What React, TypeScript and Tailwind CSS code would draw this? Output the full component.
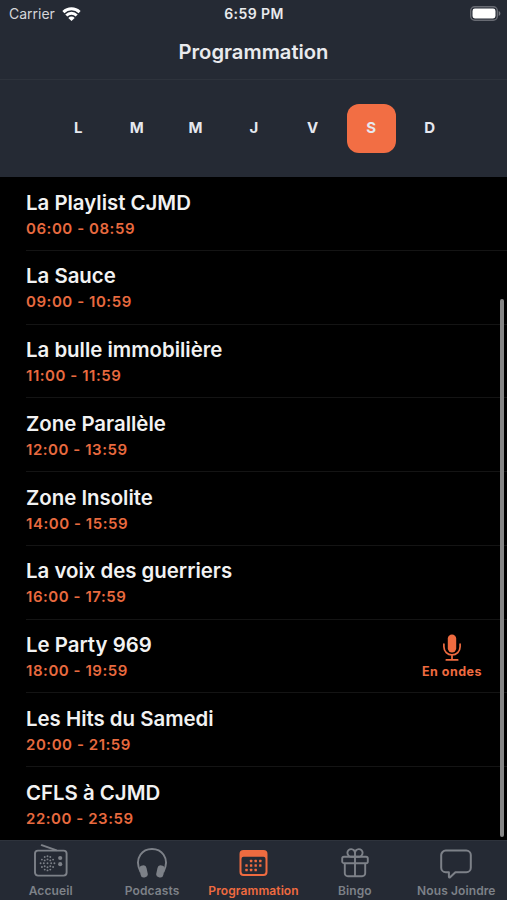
import type { ReactNode } from "react";

type Show = { title: string; time: string; live?: boolean };

const days = ["L", "M", "M", "J", "V", "S", "D"];
const selectedDay = 5;

const shows: Show[] = [
  { title: "La Playlist CJMD", time: "06:00 - 08:59" },
  { title: "La Sauce", time: "09:00 - 10:59" },
  { title: "La bulle immobilière", time: "11:00 - 11:59" },
  { title: "Zone Parallèle", time: "12:00 - 13:59" },
  { title: "Zone Insolite", time: "14:00 - 15:59" },
  { title: "La voix des guerriers", time: "16:00 - 17:59" },
  { title: "Le Party 969", time: "18:00 - 19:59", live: true },
  { title: "Les Hits du Samedi", time: "20:00 - 21:59" },
  { title: "CFLS à CJMD", time: "22:00 - 23:59" },
];

function WifiIcon() {
  return (
    <svg className="ml-[7px] h-[14px] w-[19px] text-white" viewBox="0 0 18 14" fill="none" stroke="currentColor" strokeWidth="2.9">
      <path d="M0.9 5.1a11.5 11.5 0 0 1 16.2 0" />
      <path d="M3.8 8.5a7.3 7.3 0 0 1 10.4 0" />
      <path d="M9 14 5.8 10.9a4.6 4.6 0 0 1 6.400 0z" fill="currentColor" stroke="none" />
    </svg>
  );
}

function BatteryIcon() {
  return (
    <svg className="h-[15px] w-[31px]" viewBox="0 0 31 15">
      <rect x="0.7" y="0.7" width="26.6" height="13.6" rx="4" fill="none" stroke="#686b73" strokeWidth="1.4" />
      <rect x="2.5" y="2.5" width="23" height="10" rx="2.4" fill="#fff" />
      <path d="M28.7 5v5c1-.4 1.7-1.4 1.7-2.5S29.7 5.4 28.7 5z" fill="#777a82" />
    </svg>
  );
}

function MicIcon() {
  return (
    <svg className="h-[27px] w-[18px]" viewBox="0 0 18 27" fill="none" stroke="currentColor" strokeWidth="1.7" strokeLinecap="round">
      <rect x="4.8" y="0.4" width="8.4" height="18" rx="4.2" fill="currentColor" stroke="none" />
      <path d="M0.9 10.2v2.6a8.1 8.1 0 0 0 16.2 0v-2.6M9 21v4.8M3.3 25.9h11.4" />
    </svg>
  );
}

const speakerDots = [
  [13.5, 12.2], [10.7, 13], [16.3, 13],
  [7.9, 15.6], [13.5, 15.4], [19.1, 15.6], [10.7, 16.4], [16.3, 16.4],
  [6.6, 19.3], [9.8, 19.3], [13.5, 19.3], [17.2, 19.3], [20.4, 19.3],
  [7.9, 23], [13.5, 23.2], [19.1, 23], [10.7, 22.2], [16.3, 22.2],
  [13.5, 26.4], [10.7, 25.6], [16.3, 25.6],
];

function RadioIcon() {
  return (
    <svg className="h-[34px] w-[34px]" viewBox="0 0 34 34" fill="none" stroke="currentColor" strokeWidth="1.9">
      <rect x="1" y="6.6" width="31.6" height="25" rx="3" />
      <path d="M7.7 1.2 22 6.2" strokeLinecap="round" />
      <g fill="currentColor" stroke="none">
        {speakerDots.map(([x, y], i) => (
          <circle key={i} cx={x} cy={y} r="0.95" />
        ))}
        <circle cx="26.2" cy="14" r="2.1" />
        <circle cx="26.2" cy="20.2" r="2.1" />
      </g>
    </svg>
  );
}

function HeadphonesIcon() {
  return (
    <svg className="h-[34px] w-[30px]" viewBox="0 0 30 34" fill="none" stroke="currentColor" strokeWidth="1.9">
      <path d="M3.6 28C.2 21.5.6 14.900 3.400 10.800 8.700 3 21.300 3 26.600 10.800c2.800 4.100 3.200 10.700-.2 17.200" />
      <rect x="3" y="21.4" width="7.2" height="12.1" rx="3.2" transform="rotate(-12 6.6 27.5)" fill="currentColor" stroke="none" />
      <rect x="19.8" y="21.4" width="7.2" height="12.1" rx="3.2" transform="rotate(12 23.4 27.5)" fill="currentColor" stroke="none" />
    </svg>
  );
}

const calendarDots = [
  [12.1, 17], [16.7, 17], [21.3, 17],
  [7.5, 21.5], [12.1, 21.5], [16.7, 21.5], [21.3, 21.5],
  [7.5, 26], [12.1, 26], [16.7, 26],
];

function CalendarIcon() {
  return (
    <svg className="h-[34px] w-[29px]" viewBox="0 0 29 34">
      <path
        d="M4.500 6h20a4 4 0 0 1 4 4v18a4 4 0 0 1-4 4h-20a4 4 0 0 1-4-4V10a4 4 0 0 1 4-4zM4.500 12.800a2 2 0 0 0-2 2v12.900a2.200 2.200 0 0 0 2.200 2.200h19.600a2.200 2.200 0 0 0 2.200-2.200V14.800a2 2 0 0 0-2-2z"
        fill="currentColor"
        fillRule="evenodd"
      />
      {calendarDots.map(([x, y], i) => (
        <rect key={i} x={x - 1.2} y={y - 1.2} width="2.4" height="2.4" rx="0.5" fill="currentColor" />
      ))}
    </svg>
  );
}

function GiftIcon() {
  return (
    <svg className="h-[34px] w-[28px]" viewBox="0 0 28 34" fill="none" stroke="currentColor" strokeWidth="1.9">
      <rect x="1.2" y="12.8" width="25.6" height="6.4" rx="1.8" />
      <path d="M3.8 19.2v10a3 3 0 0 0 3 3h14.4a3 3 0 0 0 3-3v-10M14 12.8v19.400" />
      <path d="M14 12.600V9a3.800 3.800 0 1 0-3.800 3.700zM14 12.600V9a3.800 3.800 0 1 1 3.800 3.700z" />
    </svg>
  );
}

function BubbleIcon() {
  return (
    <svg className="h-[36px] w-[32px] -mb-[2px]" viewBox="0 0 32 36" fill="none" stroke="currentColor" strokeWidth="2" strokeLinejoin="round">
      <path d="M5.700 6.600h20.600a4.500 4.500 0 0 1 4.500 4.500v12.600a4.500 4.500 0 0 1-4.500 4.500H15.400l-5.300 5.100c-.5.500-1.200.2-1.200-.5v-4.600H5.700a4.500 4.500 0 0 1-4.500-4.500V11.100a4.500 4.500 0 0 1 4.500-4.500z" />
    </svg>
  );
}

function Tab({ label, icon, active = false }: { label: string; icon: ReactNode; active?: boolean }) {
  return (
    <a className={`flex flex-1 flex-col items-center pt-[3px] ${active ? "text-[#ef6b40]" : "text-[#7d8188]"}`}>
      {icon}
      <span className="mt-[5px] text-[12px] leading-[16px] font-semibold tracking-[0.1px] whitespace-nowrap">{label}</span>
    </a>
  );
}

export default function App() {
  return (
    <div className="relative flex h-[900px] w-[507px] flex-col overflow-hidden bg-black font-['Inter',sans-serif]">
      <header className="h-[79px] bg-[#252a34] text-[#e9eaed]">
        <div className="grid h-[27px] grid-cols-3 items-center pr-[6px] pl-[9px] text-[14px]">
          <div className="flex items-center text-[#d5d6d9]">
            Carrier
            <WifiIcon />
          </div>
          <div className="text-center font-semibold tracking-[0.4px] -translate-x-px">6:59 PM</div>
          <div className="flex justify-end">
            <BatteryIcon />
          </div>
        </div>
        <h1 className="pt-[11px] text-center text-[20.2px] leading-7 font-semibold">Programmation</h1>
      </header>

      {/* Day picker */}
      <div className="flex h-[98px] items-center justify-center gap-[9.6px] border-t border-[#2e333c] bg-[#252a34] pl-px">
        {days.map((day, i) => (
          <button
            key={i}
            className={`size-[49px] rounded-[12px] text-[15px] font-bold text-[#e6e8ef] ${i === selectedDay ? "bg-[#f26e44]" : ""}`}
          >
            {day}
          </button>
        ))}
      </div>

      <ul>
        {shows.map((show) => (
          <li key={show.title} className="flex h-[73.75px] pl-[26px]">
            <div className="flex flex-1 justify-between border-b border-[#141414] pr-[25px]">
              <div className="pt-[11.5px]">
                <h2 className="text-[20.4px] leading-[27px] font-semibold text-[#f2f2f2]">{show.title}</h2>
                <p className="mt-[2px] text-[15px] leading-[22px] font-semibold tracking-[0.55px] text-[#e86a3f]">{show.time}</p>
              </div>
              {show.live && (
                <div className="flex flex-col items-center pt-[14px] text-[#ef6b40]">
                  <MicIcon />
                  <span className="mt-[3px] text-[12.5px] leading-4 font-bold tracking-[0.5px]">En ondes</span>
                </div>
              )}
            </div>
          </li>
        ))}
      </ul>

      {/* Scroll indicator */}
      <div className="absolute top-[299px] right-[3px] h-[538px] w-[4px] rounded-full bg-[#858585]" />

      <nav className="absolute inset-x-0 bottom-0 flex h-[60px] border-t border-[#2e333c] bg-[#252a34]">
        <Tab label="Accueil" icon={<RadioIcon />} />
        <Tab label="Podcasts" icon={<HeadphonesIcon />} />
        <Tab label="Programmation" icon={<CalendarIcon />} active />
        <Tab label="Bingo" icon={<GiftIcon />} />
        <Tab label="Nous Joindre" icon={<BubbleIcon />} />
      </nav>
    </div>
  );
}
